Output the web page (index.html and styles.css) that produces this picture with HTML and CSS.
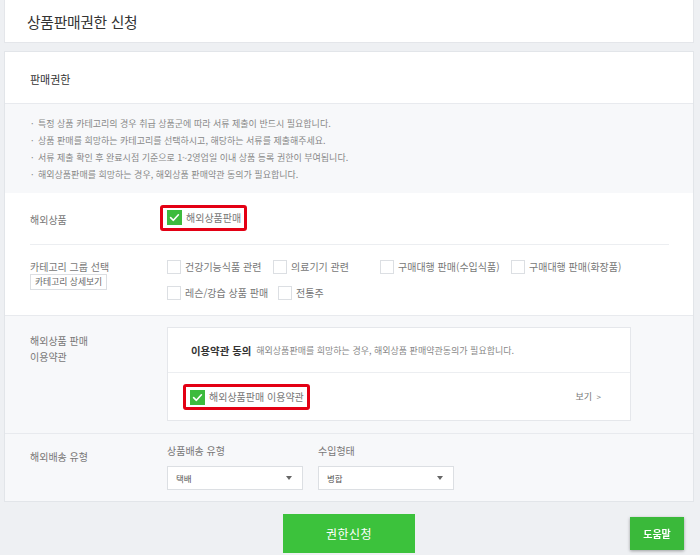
FILE: index.html
```html
<!DOCTYPE html>
<html lang="ko">
<head>
<meta charset="utf-8">
<title>상품판매권한 신청</title>
<link rel="stylesheet" href="styles.css">
</head>
<body>
<div class="page">
  <header class="top"><h1 class="title">상품판매권한 신청</h1></header>

  <section class="card">
    <div class="card-head">판매권한</div>

    <ul class="notice">
      <li>특정 상품 카테고리의 경우 취급 상품군에 따라 서류 제출이 반드시 필요합니다.</li>
      <li>상품 판매를 희망하는 카테고리를 선택하시고, 해당하는 서류를 제출해주세요.</li>
      <li>서류 제출 확인 후 완료시점 기준으로 1~2영업일 이내 상품 등록 권한이 부여됩니다.</li>
      <li>해외상품판매를 희망하는 경우, 해외상품 판매약관 동의가 필요합니다.</li>
    </ul>

    <div class="sec sec-white">
      <div class="row row-overseas">
        <div class="label">해외상품</div>
        <div class="field">
          <span class="mark">
            <label class="chk"><span class="box on"><svg viewBox="0 0 15 15" width="15" height="15"><path d="M3.6 7.6 L6.4 10.3 L11.4 4.8" fill="none" stroke="#fff" stroke-width="1.6" stroke-linecap="round" stroke-linejoin="round"/></svg></span>해외상품판매</label>
          </span>
        </div>
      </div>
      <div class="row row-cat">
        <div class="label">
          <div class="label-line">카테고리 그룹 선택</div>
          <button class="mini" type="button">카테고리 상세보기</button>
        </div>
        <div class="field cats">
          <label class="chk w1"><span class="box"></span>건강기능식품 관련</label>
          <label class="chk w2"><span class="box"></span>의료기기 관련</label>
          <label class="chk w3"><span class="box"></span>구매대행 판매(수입식품)</label>
          <label class="chk"><span class="box"></span>구매대행 판매(화장품)</label>
          <label class="chk w5"><span class="box"></span>레슨/강습 상품 판매</label>
          <label class="chk"><span class="box"></span>전통주</label>
        </div>
      </div>
    </div>

    <div class="sec sec-gray terms">
      <div class="label two">해외상품 판매<br>이용약관</div>
      <div class="terms-box">
        <div class="terms-head"><strong>이용약관 동의</strong><span class="desc">해외상품판매를 희망하는 경우, 해외상품 판매약관동의가 필요합니다.</span></div>
        <div class="terms-body">
          <span class="mark">
            <label class="chk"><span class="box on"><svg viewBox="0 0 15 15" width="15" height="15"><path d="M3.6 7.6 L6.4 10.3 L11.4 4.8" fill="none" stroke="#fff" stroke-width="1.6" stroke-linecap="round" stroke-linejoin="round"/></svg></span>해외상품판매 이용약관</label>
          </span>
          <a class="view" href="#">보기 <span class="gt">&gt;</span></a>
        </div>
      </div>
    </div>

    <div class="sec sec-gray ship">
      <div class="label ship-label">해외배송 유형</div>
      <div class="selects">
        <div class="sel-group">
          <div class="sel-title">상품배송 유형</div>
          <div class="select"><span>택배</span><i class="caret"></i></div>
        </div>
        <div class="sel-group">
          <div class="sel-title">수입형태</div>
          <div class="select"><span>병합</span><i class="caret"></i></div>
        </div>
      </div>
    </div>
  </section>

  <div class="actions"><button class="primary" type="button">권한신청</button></div>
  <button class="help" type="button">도움말</button>
</div>
</body>
</html>
```
FILE: styles.css
```css
* { box-sizing: border-box; }
html, body { margin: 0; padding: 0; }
body {
  background: #eef0f3;
  font-family: "Noto Sans CJK KR", "Noto Sans", sans-serif;
  color: #666;
  font-size: 10px;
  line-height: 14px;
}
.page { padding: 0 6px 0 4px; }

.top {
  height: 43px;
  background: #fff;
  border: 1px solid #e4e6ea;
  border-top: 0;
  display: flex;
  align-items: center;
  padding: 2px 0 0 22px;
}
.title {
  margin: 0;
  font-size: 14.8px;
  font-weight: 400;
  color: #333;
  letter-spacing: -0.3px;
}

.card {
  margin-top: 8px;
  background: #fff;
  border: 1px solid #e2e5e9;
}
.card-head {
  height: 52px;
  display: flex;
  align-items: center;
  padding: 2px 0 0 25px;
  font-size: 11px;
  color: #333;
  border-bottom: 1px solid #e8eaee;
}

.notice {
  margin: 0;
  list-style: none;
  background: #f7f8fa;
  padding: 11px 25px 10px 26px;
  font-size: 9px;
  line-height: 17px;
  color: #888;
}
.notice li { height: 17px; }
.notice li::before { content: "·"; display: inline-block; width: 7px; }

.sec-gray { background: #f7f8fa; border-top: 1px solid #e8eaee; }

.row { display: flex; margin: 0 24px 0 25px; }
.label { width: 137px; flex: none; color: #777; }
.row-overseas {
  height: 52px;
  align-items: center;
  padding-top: 2px;
  border-bottom: 1px solid #eceef1;
}
.row-cat { padding: 15px 0 15px; }
.label-line { height: 14px; }
.mini {
  display: block;
  height: 16px;
  padding: 0 4px;
  border: 1px solid #dcdfe3;
  background: #fff;
  font-family: inherit;
  font-size: 8.8px;
  line-height: 14px;
  color: #666;
}

.chk {
  display: inline-flex;
  align-items: center;
  height: 14px;
  color: #777;
  white-space: nowrap;
}
.box {
  width: 14px;
  height: 14px;
  flex: none;
  border: 1px solid #dcdfe3;
  background: #fff;
  margin-right: 4px;
}
.box.on {
  width: 15px; height: 15px;
  border: 0;
  background: #3dbb3d;
  display: flex;
}
.mark {
  display: inline-flex;
  border: 3px solid #e30014;
  border-radius: 3px;
  padding: 3px 3px 3px 4px;
  margin: -6px -7px;
  background: #fff;
}

.cats {
  display: flex;
  flex-wrap: wrap;
  width: 475px;
  row-gap: 12px;
}
.cats .w1 { width: 106px; }
.cats .w2 { width: 107px; }
.cats .w3 { width: 131px; }
.cats .w5 { width: 111px; }

.terms { display: flex; padding: 11px 62px 12px 25px; }
.two { padding-top: 6px; line-height: 16px; }
.terms-box { flex: 1; background: #fff; border: 1px solid #e5e7eb; }
.terms-head {
  height: 45px;
  display: flex;
  align-items: center;
  padding: 1px 0 0 23px;
  border-bottom: 1px solid #eceef1;
}
.terms-head strong { font-size: 10.4px; color: #333; margin-right: 5px; }
.desc { font-size: 9px; color: #888; }
.terms-body {
  height: 47px;
  display: flex;
  align-items: center;
  justify-content: space-between;
  padding: 1px 29px 0 22px;
}
.view { color: #777; text-decoration: none; font-size: 9px; }
.gt { font-size: 8px; margin-left: 2px; }

.ship { display: flex; padding: 10px 25px 11px 25px; }
.ship-label { padding-top: 6px; }
.selects { display: flex; gap: 15px; }
.sel-title { height: 14px; margin-bottom: 8px; color: #777; }
.select {
  width: 136px;
  height: 24px;
  background: #fff;
  border: 1px solid #dcdfe3;
  display: flex;
  align-items: center;
  justify-content: space-between;
  padding: 0 10px 0 8px;
  font-size: 8.5px;
  color: #555;
}
.caret {
  width: 0; height: 0;
  border-left: 3.5px solid transparent;
  border-right: 3.5px solid transparent;
  border-top: 4px solid #666;
}

.actions { display: flex; justify-content: center; margin-top: 12px; }
.primary {
  width: 132px;
  height: 39px;
  border: 0;
  background: #3cc23c;
  color: #fff;
  font-family: inherit;
  font-size: 12px;
  letter-spacing: 0.5px;
}
.help {
  position: fixed;
  right: 16px;
  bottom: 5px;
  width: 54px;
  height: 33px;
  border: 0;
  background: #3ab93a;
  color: #fff;
  font-family: inherit;
  font-size: 10px;
  font-weight: 700;
  box-shadow: 0 1px 3px rgba(0,0,0,0.35);
}
```
